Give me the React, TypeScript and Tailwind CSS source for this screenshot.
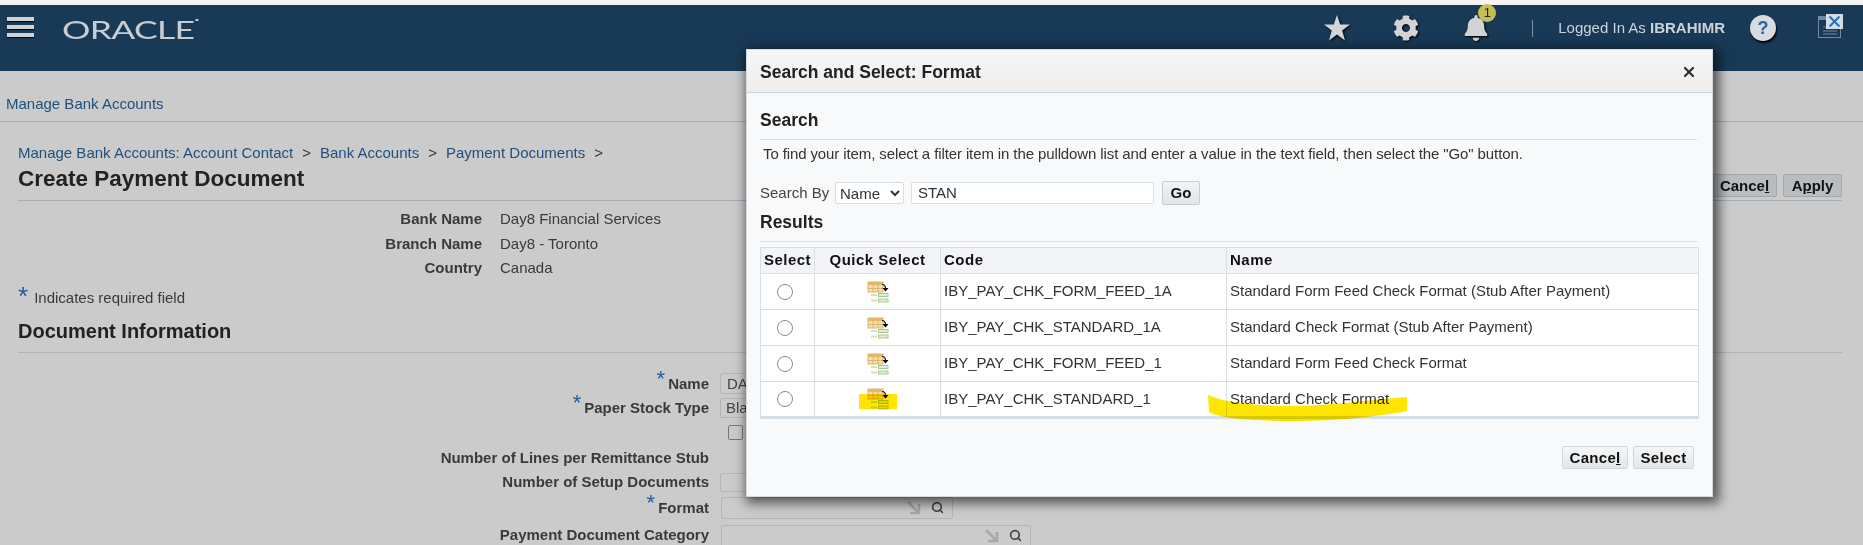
import React from 'react';
import { Search, X } from 'lucide-react';
import { FaCog, FaBell } from 'react-icons/fa';

const QuickSelectIcon = () => (
  <svg width="22" height="22" viewBox="0 0 22 22" className="mx-auto block">
    <rect x="1" y="1" width="15" height="10" fill="#f0dfb4" stroke="#dcb56c" />
    <rect x="1" y="1" width="15" height="3" fill="#e4b764" />
    <path d="M1 7.5h15M6 4v7M11 4v7" stroke="#dcb56c" strokeWidth="1" />
    <path d="M15 3.5c3 0 3.5 1.5 3.5 4" fill="none" stroke="#111" strokeWidth="1.2" />
    <path d="M15.5 7h6l-3 3.5z" fill="#000" />
    <path d="M4 14h6M4 19.5h6" stroke="#cfe3c3" strokeWidth="2" />
    <rect x="11.5" y="12.5" width="9.5" height="3" fill="#e2efd8" stroke="#a9c795" />
    <rect x="11.5" y="18" width="9.5" height="3" fill="#e2efd8" stroke="#a9c795" />
  </svg>
);

const StarIcon = () => (
  <svg width="26" height="26" viewBox="0 0 26 26" className="drop-shadow-[1px_1px_1px_#000]">
    <polygon points="13,0 16.2,9.4 26,9.6 18.2,15.6 21,25.5 13,19.6 5,25.5 7.8,15.6 0,9.6 9.8,9.4" fill="#d4d5d6" />
  </svg>
);

const WindowIcon = () => (
  <svg width="26" height="25" viewBox="0 0 26 25">
    <rect x="0.5" y="2.5" width="22" height="21" fill="none" stroke="#6f8ba3" />
    <rect x="1" y="3" width="21" height="3" fill="#6f8ba3" />
    <path d="M5 13h14M5 17h14M5 20h14" stroke="#6f8ba3" strokeWidth="1" />
    <rect x="8" y="0" width="17" height="15" fill="#d5dde3" />
    <path d="M11.5 2.5l10 10M21.5 2.5l-10 10" stroke="#2c6fb8" strokeWidth="2" />
  </svg>
);

const DownRightArrow = () => (
  <svg width="14" height="14" viewBox="0 0 14 14">
    <path d="M1 1l10 10M12 3v9H3" fill="none" stroke="#a9a9a9" strokeWidth="2.6" />
  </svg>
);

const Req = () => <span className="text-[#1d5da3] text-[22px] leading-none font-normal relative top-[-3px] mr-[3px]">*</span>;

const PageButton = ({ children, className }: { children: React.ReactNode; className: string }) => (
  <button className={`h-[23px] rounded-[2px] border border-[#a3a8ab] bg-[#b9bdc0] text-[15px] font-bold text-[#111] ${className}`}>
    {children}
  </button>
);

const DialogButton = ({ children, className }: { children: React.ReactNode; className: string }) => (
  <button className={`h-[23px] rounded-[2px] border border-[#cfd6dc] bg-gradient-to-b from-[#f5f6f7] to-[#e3e7ea] text-[15px] font-bold text-[#111] tracking-[0.3px] ${className}`}>
    {children}
  </button>
);

const FormRow = ({ label, required, className, children }: { label?: string; required?: boolean; className: string; children?: React.ReactNode }) => (
  <div className={`flex items-center ${className}`}>
    <div className="w-[691px] text-right text-[15px] font-bold text-[#3a3a3a] whitespace-nowrap">
      {required && <Req />}
      {label}
    </div>
    <div className="ml-[11px] flex items-center">{children}</div>
  </div>
);

const rows = [
  ['IBY_PAY_CHK_FORM_FEED_1A', 'Standard Form Feed Check Format (Stub After Payment)'],
  ['IBY_PAY_CHK_STANDARD_1A', 'Standard Check Format (Stub After Payment)'],
  ['IBY_PAY_CHK_FORM_FEED_1', 'Standard Form Feed Check Format'],
  ['IBY_PAY_CHK_STANDARD_1', 'Standard Check Format'],
];

const info = [
  ['Bank Name', 'Day8 Financial Services'],
  ['Branch Name', 'Day8 - Toronto'],
  ['Country', 'Canada'],
];

const Dialog = () => (
  <div className="absolute left-[746px] top-[49px] w-[967px] h-[448px] bg-[#f8f9fa] border border-[#d3dae0] shadow-[3px_3px_11px_3px_rgba(0,0,0,0.6)] text-[#333]">
    <div className="h-[43px] flex items-center justify-between pl-[13px] pr-[15px] pt-[2px] border-b border-[#c9d3dc] bg-gradient-to-b from-[#f6f6f6] to-[#eeeeee]">
      <span className="text-[17.5px] font-bold text-[#222]">Search and Select: Format</span>
      <X size={16} strokeWidth={3.4} className="text-[#333]" />
    </div>
    <div className="pl-[13px] pr-[15px]">
      <div className="mt-[15px] h-[32px] border-b border-[#d8e0e7] text-[17.5px] font-bold text-[#222] leading-[24px]">Search</div>
      <div className="pl-[3px] h-[28px] text-[15px] leading-[28px] text-[#333] tracking-[-0.11px] whitespace-nowrap">
        To find your item, select a filter item in the pulldown list and enter a value in the text field, then select the "Go" button.
      </div>
      <div className="mt-[13px] h-[24px] flex items-center text-[15px]">
        <span className="w-[75px] text-[#444] whitespace-nowrap">Search By</span>
        <select defaultValue="Name" className="w-[69px] h-[22px] bg-white border border-[#d6dfe6] rounded-[2px] text-[15px] text-[#333]">
          <option>Name</option>
        </select>
        <input defaultValue="STAN" className="ml-[7px] w-[243px] h-[22px] bg-white border border-[#d6dfe6] rounded-[2px] pl-[6px] text-[15px] text-[#333]" />
        <button className="ml-[8px] w-[38px] h-[24px] rounded-[2px] border border-[#c5ced5] bg-gradient-to-b from-[#f2f4f5] to-[#e0e5e9] text-[15px] font-bold text-[#111]">Go</button>
      </div>
      <div className="h-[37px] border-b border-[#d8e0e7] text-[17.5px] font-bold text-[#222] leading-[34px]">Results</div>
      <table className="mt-[5px] w-[938px] table-fixed border-collapse border-b-[3px] border-[#d6dfe6] text-[15px]">
        <colgroup>
          <col className="w-[54px]" />
          <col className="w-[126px]" />
          <col className="w-[286px]" />
          <col className="w-[472px]" />
        </colgroup>
        <thead>
          <tr className="h-[26px] bg-[#f2f4f8] font-bold text-[#111] tracking-[0.5px]">
            <th className="border border-[#d6dfe6] font-bold whitespace-nowrap">Select</th>
            <th className="border border-[#d6dfe6] font-bold whitespace-nowrap">Quick Select</th>
            <th className="border border-[#d6dfe6] font-bold text-left pl-[3px]">Code</th>
            <th className="border border-[#d6dfe6] font-bold text-left pl-[3px]">Name</th>
          </tr>
        </thead>
        <tbody>
          {rows.map(([code, name]) => (
            <tr key={code} className="h-[36px] bg-white">
              <td className="border border-[#d6dfe6]">
                <div className="ml-[16px] w-[16px] h-[16px] rounded-full border border-[#8a8a8a] bg-white" />
              </td>
              <td className="border border-[#d6dfe6]"><QuickSelectIcon /></td>
              <td className="border border-[#d6dfe6] pl-[3px] text-[#333] whitespace-nowrap">{code}</td>
              <td className="border border-[#d6dfe6] pl-[3px] text-[#333] whitespace-nowrap">{name}</td>
            </tr>
          ))}
        </tbody>
      </table>
      <div className="mt-[27px] flex justify-end gap-[5px] pr-[3px]">
        <DialogButton className="w-[66px]">Cance<u>l</u></DialogButton>
        <DialogButton className="w-[61px]">Select</DialogButton>
      </div>
    </div>
  </div>
);

export default function App() {
  return (
    <div className="relative w-[1863px] h-[545px] overflow-hidden bg-[#cbcbcb] font-['Liberation_Sans',Arial,sans-serif] text-[15px]">
      <div className="h-[5px] bg-[#f4f4f4]" />
      <header className="h-[66px] bg-[#183a57] flex items-start text-[#d2d3d4]">
        <div className="ml-[7px] mt-[12px] w-[27px] flex flex-col gap-[4px]">
          <div className="h-[4px] bg-[#d2d2d2] shadow-[0_1px_1px_#000]" />
          <div className="h-[4px] bg-[#d2d2d2] shadow-[0_1px_1px_#000]" />
          <div className="h-[4px] bg-[#d2d2d2] shadow-[0_1px_1px_#000]" />
        </div>
        <span className="relative ml-[28px] mt-[9px] text-[25px] leading-[30px] font-['Lato',sans-serif] font-normal text-[#c9cdd0] origin-left scale-x-[1.42] tracking-[-0.5px]">
          ORACLE
          <span className="absolute right-[-3px] top-[5px] w-[2px] h-[2px] bg-[#c9cdd0]" />
        </span>
        <div className="ml-auto flex items-center h-[46px] relative">
          <div className="mr-[43px]"><StarIcon /></div>
          <FaCog size={26} className="mr-[44px] drop-shadow-[1px_1px_1px_#000]" />
          <div className="relative mr-[43px]">
            <FaBell size={26} className="drop-shadow-[1px_1px_1px_#000]" />
            <span className="absolute left-[15px] top-[-11px] w-[18px] h-[18px] rounded-full bg-[#c9bf4f] text-[#222] text-[13px] leading-[18px] text-center">1</span>
          </div>
          <div className="w-px h-[17px] bg-[#7d93a6] mr-[25px]" />
          <span className="text-[15px] text-[#cdd2d6] whitespace-nowrap mr-[25px]">Logged In As <b className="font-bold">IBRAHIMR</b></span>
          <div className="w-[26px] h-[26px] rounded-full bg-[#d8dce0] text-[#24639e] text-[18px] font-bold leading-[26px] text-center shadow-[1px_2px_2px_#000] mr-[42px]">?</div>
          <div className="mr-[19px] mt-[-4px]"><WindowIcon /></div>
        </div>
      </header>
      <div className="h-[51px] border-b border-[#a7adb2] pl-[6px] pt-[23px] leading-[20px] text-[#1f4f7d]">Manage Bank Accounts</div>
      <main className="pl-[18px] pr-[21px]">
        <div className="mt-[21px] h-[20px] leading-[20px] text-[#1f4f7d] whitespace-nowrap">
          Manage Bank Accounts: Account Contact<span className="mx-[9px] text-[#333]">&gt;</span>Bank Accounts<span className="mx-[9px] text-[#333]">&gt;</span>Payment Documents<span className="mx-[9px] text-[#333]">&gt;</span>
        </div>
        <div className="mt-[3px] h-[35px] border-b border-[#a7adb2] flex justify-between">
          <h1 className="text-[22.5px] font-bold leading-[26px] text-[#222]">Create Payment Document</h1>
          <div className="mt-[8px] flex gap-[6px]">
            <PageButton className="w-[65px]">Cance<u>l</u></PageButton>
            <PageButton className="w-[59px]">A<u>p</u>ply</PageButton>
          </div>
        </div>
        <div className="mt-[6px]">
          {info.map(([label, value]) => (
            <div key={label} className="h-[24.5px] flex items-center">
              <span className="w-[464px] text-right font-bold text-[#3a3a3a]">{label}</span>
              <span className="ml-[18px] text-[#3a3a3a]">{value}</span>
            </div>
          ))}
        </div>
        <div className="mt-[8px] h-[20px] flex items-center text-[#3a3a3a]">
          <span className="text-[#1d5da3] text-[26px] leading-none relative top-[-3px] mr-[6px]">*</span>
          <span className="text-[15px]">Indicates required field</span>
        </div>
        <div className="mt-[9px] h-[35px] border-b border-[#b3b3b3] text-[20px] font-bold leading-[26px] text-[#222]">Document Information</div>
      </main>
      <section className="mt-[20px] pl-[18px]">
        <FormRow label="Name" required className="h-[21px]">
          <div className="w-[240px] h-[21px] border border-[#b5b5b5] rounded-[2px] pl-[6px] text-[#444] leading-[19px]">DA</div>
        </FormRow>
        <FormRow label="Paper Stock Type" required className="h-[20px] mt-[4px]">
          <div className="w-[240px] h-[20px] border border-[#b5b5b5] rounded-[2px] pl-[5px] text-[#444] leading-[18px]">Bla</div>
        </FormRow>
        <FormRow className="h-[15px] mt-[7px]">
          <div className="ml-[8px] w-[15px] h-[15px] border border-[#777] rounded-[2px]" />
        </FormRow>
        <FormRow label="Number of Lines per Remittance Stub" className="h-[16px] mt-[11px]" />
        <FormRow label="Number of Setup Documents" className="h-[19px] mt-[6px]">
          <div className="w-[240px] h-[19px] border border-[#b5b5b5] rounded-[2px]" />
        </FormRow>
        <FormRow label="Format" required className="h-[22px] mt-[5px]">
          <div className="ml-[1px] w-[232px] h-[22px] border border-[#b5b5b5] rounded-[2px] flex items-center justify-end gap-[10px] pr-[8px]">
            <DownRightArrow />
            <Search size={13} strokeWidth={3} className="text-[#444]" />
          </div>
        </FormRow>
        <FormRow label="Payment Document Category" className="h-[22px] mt-[6px]">
          <div className="ml-[1px] w-[310px] h-[22px] border border-[#b5b5b5] rounded-[2px] flex items-center justify-end gap-[10px] pr-[8px]">
            <DownRightArrow />
            <Search size={13} strokeWidth={3} className="text-[#444]" />
          </div>
        </FormRow>
      </section>
      <Dialog />
      {/* yellow marker strokes over the last row */}
      <div className="absolute left-[859px] top-[394px] w-[38px] h-[15px] bg-[#ffe600] mix-blend-multiply" />
      <svg className="absolute left-[1206px] top-[393px] mix-blend-multiply" width="204" height="30" viewBox="0 0 204 30">
        <path d="M2 2C20 10 50 13 90 13C130 12 170 6 201 4L201 18C170 24 130 28 90 28C50 28 15 26 3 19Z" fill="#ffe600" />
      </svg>
    </div>
  );
}
